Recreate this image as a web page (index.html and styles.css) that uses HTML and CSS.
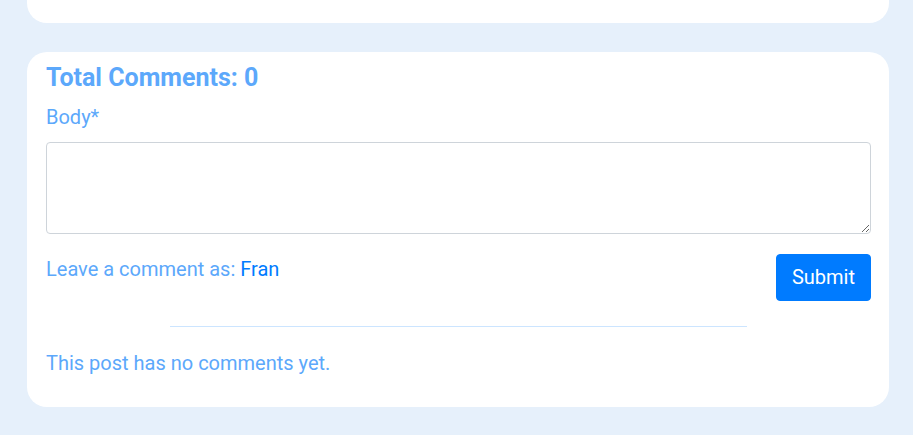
FILE: index.html
```html
<!DOCTYPE html>
<html>
<head>
<meta charset="utf-8">
<link rel="stylesheet" href="styles.css">
</head>
<body>
<div class="page">
  <div class="card card-prev"></div>
  <section class="card comments">
    <h2 class="title">Total Comments: 0</h2>
    <label class="label" for="body">Body*</label>
    <textarea id="body" class="textarea"></textarea>
    <div class="actions">
      <span class="as">Leave a comment as: <span class="user">Fran</span></span>
      <button class="submit">Submit</button>
    </div>
    <hr class="divider">
    <p class="empty">This post has no comments yet.</p>
  </section>
</div>
</body>
</html>
```

FILE: styles.css
```css
html, body {
  margin: 0;
  padding: 0;
  background: #e6f0fb;
  font-family: Roboto, "Liberation Sans", sans-serif;
}
.page {
  padding: 0 24px 0 27px;
  display: flex;
  flex-direction: column;
  gap: 29px;
}
.card {
  background: #fff;
  border-radius: 20px;
}
.card-prev {
  height: 43px;
  margin-top: -20px;
}
.comments {
  padding: 11px 18px 29px 19px;
  display: flex;
  flex-direction: column;
}
.title {
  margin: 0;
  font-size: 25px;
  line-height: 30px;
  font-weight: 700;
  color: #5ca8fb;
}
.label {
  margin-top: 9px;
  font-size: 20px;
  line-height: 30px;
  color: #5ca8fb;
}
.textarea {
  margin-top: 10px;
  height: 92px;
  box-sizing: border-box;
  border: 1px solid #ced4da;
  border-radius: 4px;
  resize: vertical;
  font-family: inherit;
}
.actions {
  margin-top: 20px;
  display: flex;
  justify-content: space-between;
  align-items: flex-start;
}
.as {
  font-size: 20px;
  line-height: 30px;
  color: #5ca8fb;
}
.user {
  color: #007bff;
}
.submit {
  background: #007bff;
  color: #fff;
  border: 1px solid #007bff;
  border-radius: 4px;
  font-family: inherit;
  font-size: 20px;
  line-height: 29px;
  padding: 8px 15px;
}
.divider {
  width: 70%;
  margin: 25px auto 0;
  border: 0;
  border-top: 1px solid #cce5ff;
}
.empty {
  margin: 21px 0 0;
  font-size: 20px;
  line-height: 30px;
  color: #5ca8fb;
}
```
